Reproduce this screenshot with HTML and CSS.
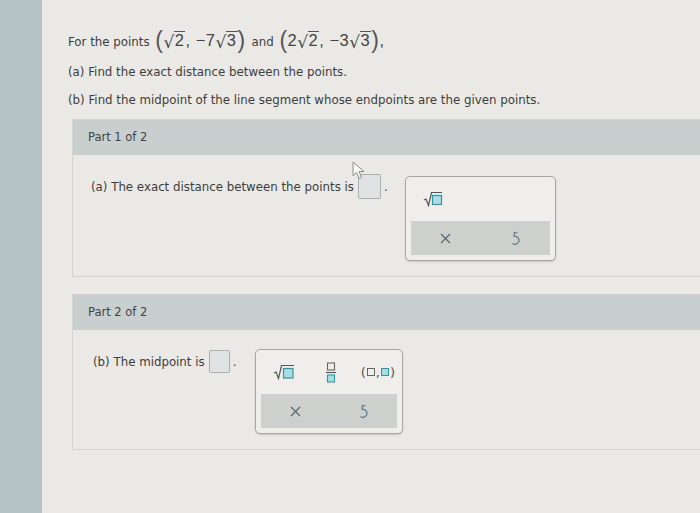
FILE: index.html
```html
<!DOCTYPE html>
<html lang="en">
<head>
    <meta charset="UTF-8">
    <title>Distance and midpoint</title>
    <link rel="stylesheet" href="styles.css">
</head>
<body>
    <div class="sidebar"></div>

    <div class="main">
        <div class="question">
            <p class="lead">For the points
                <span class="math"><span class="paren">(</span><span class="rad"><span class="rad-sign">√</span><span class="rad-arg">2</span></span>, −7<span class="rad"><span class="rad-sign">√</span><span class="rad-arg">3</span></span><span class="paren">)</span></span>
                and
                <span class="math"><span class="paren">(</span>2<span class="rad"><span class="rad-sign">√</span><span class="rad-arg">2</span></span>, −3<span class="rad"><span class="rad-sign">√</span><span class="rad-arg">3</span></span><span class="paren">)</span>,</span>
            </p>
            <p>(a) Find the exact distance between the points.</p>
            <p>(b) Find the midpoint of the line segment whose endpoints are the given points.</p>
        </div>

        <!-- Part 1 -->
        <div class="part">
            <div class="part-header">Part 1 of 2</div>
            <div class="part-body">
                <div class="answer-line">
                    (a) The exact distance between the points is
                    <span class="answer-box">
                        <svg class="cursor" width="13" height="19" viewBox="0 0 13 19">
                            <path d="M1 1 L1 15 L4.5 11.5 L7 17.5 L9.5 16.5 L7 10.5 L12 10.5 Z" fill="#f7f7f5" stroke="#8d8f8e" stroke-width="1"/>
                        </svg>
                    </span>.
                </div>
                <div class="keypad">
                    <div class="keypad-tools">
                        <button class="key">
                            <svg width="20" height="16" viewBox="0 0 20 16">
                                <path d="M1 9 L3 8 L5.5 14.5 L8.5 1.5 H19" fill="none" stroke="#555" stroke-width="1.2"/>
                                <rect x="9.5" y="4.5" width="9" height="9" fill="#a9dde2" stroke="#2f97a8" stroke-width="1.2"/>
                            </svg>
                        </button>
                    </div>
                    <div class="keypad-actions">
                        <button class="key">
                            <svg width="11" height="11" viewBox="0 0 11 11"><path d="M1 1 L10 10 M10 1 L1 10" stroke="#5b6670" stroke-width="1.2"/></svg>
                        </button>
                        <button class="key">
                            <svg width="11" height="15" viewBox="0 0 11 15"><path d="M4 5.5 A4 4 0 1 1 2.5 12.5" fill="none" stroke="#5f7c88" stroke-width="1.3"/><path d="M7.5 2 L4.5 1.5 L4 5.5" fill="none" stroke="#5f7c88" stroke-width="1.2"/></svg>
                        </button>
                    </div>
                </div>
            </div>
        </div>

        <!-- Part 2 -->
        <div class="part">
            <div class="part-header">Part 2 of 2</div>
            <div class="part-body part-body-b">
                <div class="answer-line">
                    (b) The midpoint is
                    <span class="answer-box answer-box-small"></span>.
                </div>
                <div class="keypad">
                    <div class="keypad-tools">
                        <button class="key">
                            <svg width="22" height="16" viewBox="0 0 22 16">
                                <path d="M1 9 L3 8 L5.5 14.5 L8.5 1.5 H21" fill="none" stroke="#555" stroke-width="1.2"/>
                                <rect x="10.5" y="4.5" width="9.5" height="9.5" fill="#a9dde2" stroke="#2f97a8" stroke-width="1.2"/>
                            </svg>
                        </button>
                        <button class="key">
                            <svg width="10" height="21" viewBox="0 0 10 21">
                                <rect x="1.5" y="1" width="7" height="7" fill="none" stroke="#666" stroke-width="1.1"/>
                                <path d="M0 10.5 H10" stroke="#555" stroke-width="1.1"/>
                                <rect x="1.5" y="13" width="7" height="7" fill="#a9dde2" stroke="#2f97a8" stroke-width="1.1"/>
                            </svg>
                        </button>
                        <button class="key pair">(<i class="sq"></i>,<i class="sq sq-fill"></i>)</button>
                    </div>
                    <div class="keypad-actions">
                        <button class="key">
                            <svg width="11" height="11" viewBox="0 0 11 11"><path d="M1 1 L10 10 M10 1 L1 10" stroke="#5b6670" stroke-width="1.2"/></svg>
                        </button>
                        <button class="key">
                            <svg width="11" height="15" viewBox="0 0 11 15"><path d="M4 5.5 A4 4 0 1 1 2.5 12.5" fill="none" stroke="#5f7c88" stroke-width="1.3"/><path d="M7.5 2 L4.5 1.5 L4 5.5" fill="none" stroke="#5f7c88" stroke-width="1.2"/></svg>
                        </button>
                    </div>
                </div>
            </div>
        </div>
    </div>
</body>
</html>
```

FILE: styles.css
```css
* {
    box-sizing: border-box;
}

body {
    margin: 0;
    height: 513px;
    display: flex;
    overflow: hidden;
    background: #ebe9e5;
    color: #3d3d3d;
    font-family: "DejaVu Sans", Verdana, sans-serif;
    font-size: 11.8px;
}

.sidebar {
    width: 42px;
    flex-shrink: 0;
    background: #b5c3c5;
}

.main {
    flex: 1;
    padding: 24px 0 0 26px;
    margin-right: -20px;
}

.question p {
    margin: 0;
    line-height: 28px;
}

.question .lead {
    line-height: 32px;
}

.math {
    margin: 0 2px;
    font-family: "Liberation Sans", Arial, sans-serif;
    font-size: 16.5px;
    letter-spacing: 0.5px;
    color: #444;
}

.paren {
    font-size: 23px;
    font-weight: 300;
    color: #555;
    vertical-align: -2px;
}

.rad-sign {
    display: inline-block;
    font-family: "DejaVu Sans", sans-serif;
    font-size: 17px;
    line-height: 17px;
    vertical-align: -2px;
}

.rad-arg {
    display: inline-block;
    margin-left: -1px;
    padding: 1px 1px 0;
    border-top: 1px solid #555;
    line-height: 15px;
}

/* parts */

.part {
    margin: 5px 0 0 4px;
    border: 1px solid #d3d3cf;
}

.part + .part {
    margin-top: 17px;
}

.part-header {
    height: 35px;
    line-height: 34px;
    padding-left: 15px;
    background: #c9cfce;
    color: #444;
    font-size: 11.5px;
}

.part-body {
    display: flex;
    align-items: flex-start;
    padding: 19px 18px 15px;
}

.part-body-b {
    padding-left: 20px;
}

.answer-line {
    display: flex;
    align-items: center;
    gap: 3px;
    height: 25px;
    white-space: nowrap;
}

.answer-box {
    position: relative;
    display: inline-block;
    width: 23px;
    height: 25px;
    margin-left: 1px;
    border: 1px solid #a9b0b0;
    border-radius: 2px;
    background: #dfe3e3;
}

.answer-box-small {
    width: 21px;
    height: 23px;
}

.cursor {
    position: absolute;
    left: -7px;
    top: -14px;
}

/* keypad */

.keypad {
    width: 151px;
    height: 85px;
    margin: 2px 0 0 17px;
    display: flex;
    flex-direction: column;
    border: 1px solid #a6a8a6;
    border-radius: 5px;
    background: #efeeea;
    box-shadow: 0 1px 2px rgba(0, 0, 0, 0.15);
}

.part-body-b .keypad {
    width: 148px;
    margin-top: 0;
    margin-left: 19px;
}

.keypad-tools {
    height: 44px;
    padding: 0 4px;
    display: grid;
    grid-template-columns: repeat(3, 47px);
    align-items: center;
    justify-items: center;
}

.keypad-actions {
    flex: 1;
    margin: 0 5px 5px;
    display: grid;
    grid-template-columns: 1fr 1fr;
    align-items: center;
    justify-items: center;
    background: #cdd0cd;
}

.key {
    padding: 0;
    border: none;
    background: none;
    display: flex;
    align-items: center;
    justify-content: center;
    color: #555;
    font-family: "DejaVu Sans", sans-serif;
}

.pair {
    font-size: 13px;
    gap: 1px;
}

.sq {
    display: inline-block;
    width: 8px;
    height: 8px;
    border: 1.2px solid #666;
}

.sq-fill {
    border-color: #2f97a8;
    background: #a9dde2;
}
```
